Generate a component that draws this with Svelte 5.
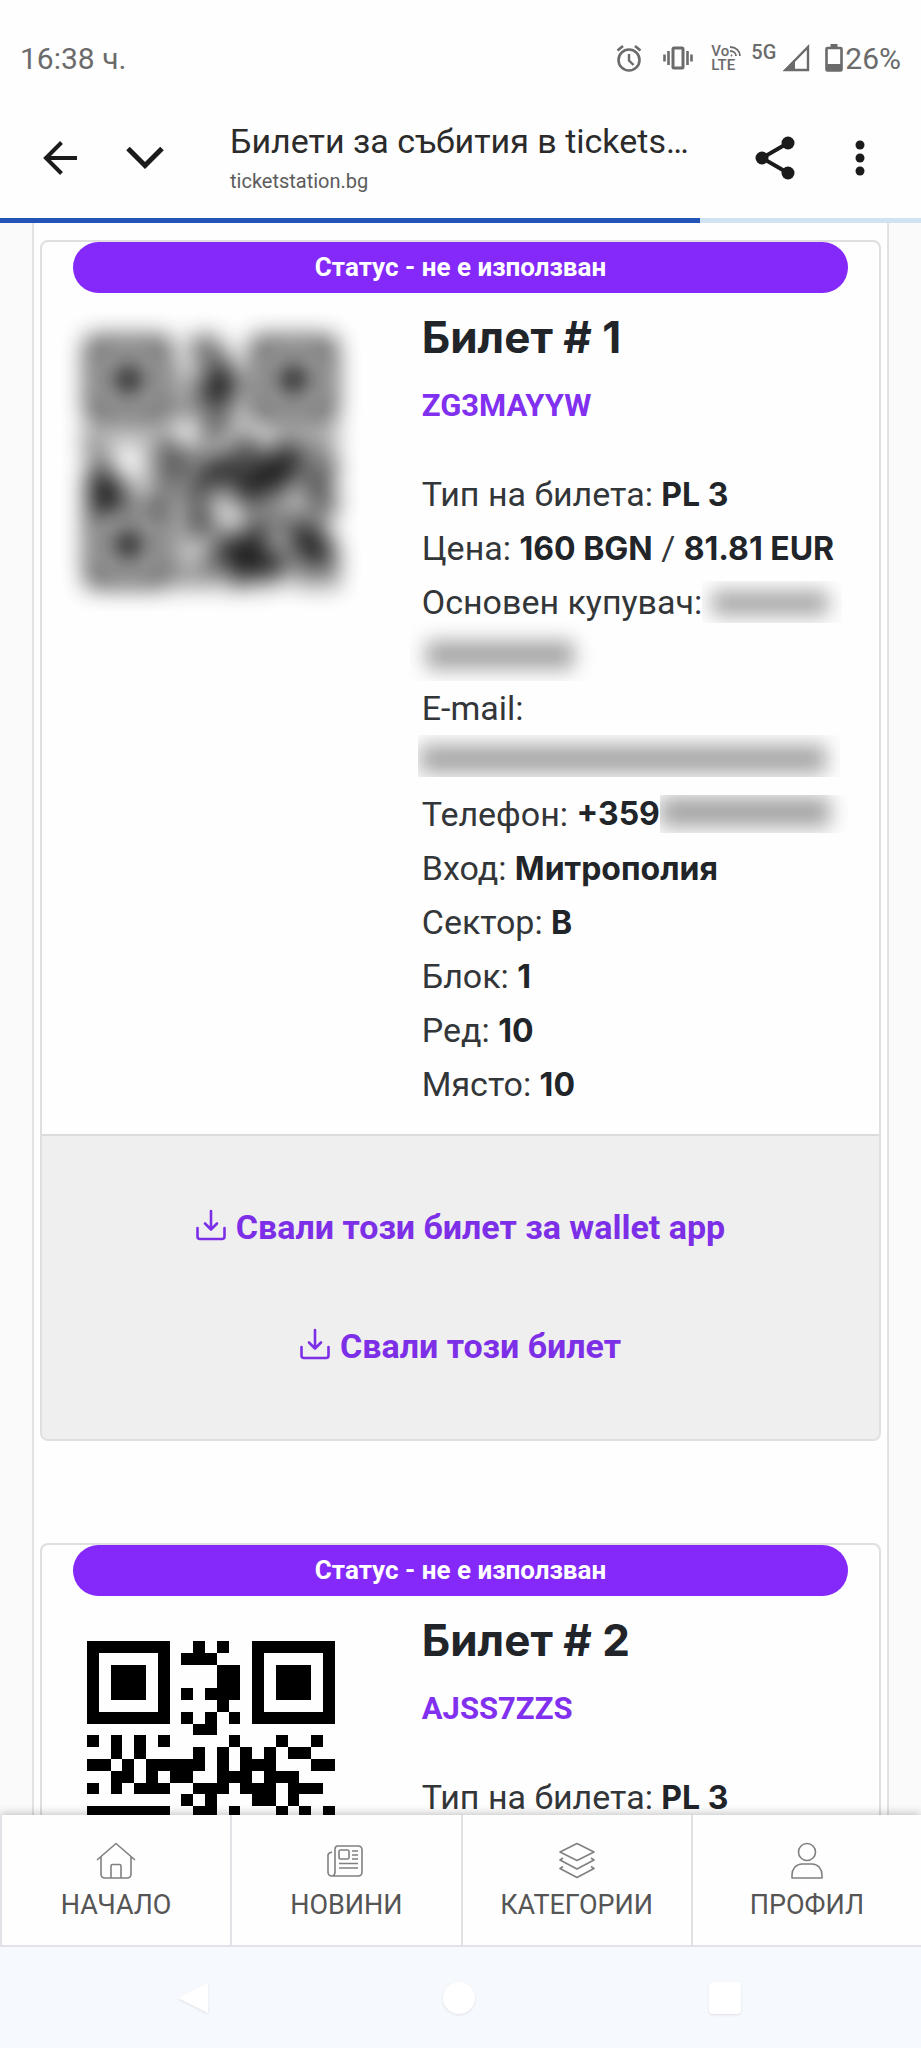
<script lang="ts">
  const progress = 76;

  const blurredCode = [
    "111111100110001111111",
    "100000100101001000001",
    "101110100011001011101",
    "101110101011101011101",
    "101110100111101011101",
    "100000101011001000001",
    "111111101010101111111",
    "000000000011000000000",
    "101010100010010010101",
    "100000110100111011010",
    "010001011011101111101",
    "110000110111111111011",
    "111101010110111110110",
    "111000101101011010011",
    "111111100100010100101",
    "100000101110001011010",
    "101110100101011101110",
    "101110101001111001111",
    "101110100011111110111",
    "100000101010111110101",
    "111111101010110100101",
  ];

  const plainCode = [
    "111111100101001111111",
    "100000101110001000001",
    "101110100001101011101",
    "101110100001101011101",
    "101110101011101011101",
    "100000100001001000001",
    "111111101010101111111",
    "000000000110000000000",
    "101010100000100010010",
    "001010000101010101100",
    "110101111101011100011",
    "001101011001110111000",
    "101011100111011101110",
    "000000001010001101000",
    "111111100110100010101",
    "100000101010110101100",
    "101110100110001011010",
    "101110101001010110101",
    "101110100101101001110",
    "100000101100011010011",
    "111111100011010101100",
  ];

  const tickets = [
    {
      number: 1,
      code: "ZG3MAYYW",
      qr: blurredCode,
      hidden: true,
      seat: [
        ["Вход", "Митрополия"],
        ["Сектор", "B"],
        ["Блок", "1"],
        ["Ред", "10"],
        ["Място", "10"],
      ],
      links: ["Свали този билет за wallet app", "Свали този билет"],
    },
    {
      number: 2,
      code: "AJSS7ZZS",
      qr: plainCode,
      hidden: false,
      seat: [],
      links: [],
    },
  ];

  const qrPath = (rows: string[]) =>
    rows
      .map((row, y) =>
        [...row]
          .map((cell, x) => (cell === "1" ? `M${x} ${y}h1v1h-1z` : ""))
          .join(""),
      )
      .join("");
</script>

<div class="screen" lang="bg">
  <div class="status-bar">
    <span class="clock">16:38 ч.</span>
    <div class="status-icons">
      <svg class="alarm" viewBox="0 0 26 28" fill="none" stroke="currentColor">
        <circle cx="13" cy="16" r="10.5" stroke-width="2.6" />
        <path d="M13 10v6.5l4.5 4.5" stroke-width="2.4" />
        <path d="M1.5 6.5 7 2M24.5 6.5 19 2" stroke-width="2.6" />
      </svg>
      <svg class="vibrate" viewBox="0 0 30 24" fill="none" stroke="currentColor">
        <rect x="10" y="2" width="10" height="20" rx="1" stroke-width="3" />
        <path d="M5.5 5v14M24.5 5v14" stroke-width="2.6" />
        <path d="M1.5 8.5v7M28.5 8.5v7" stroke-width="2.6" />
      </svg>
      <span class="volte">
        <span class="volte-top">
          Vo
          <svg viewBox="0 0 12 12" fill="none" stroke="currentColor" stroke-width="1.8">
            <path d="M1 2c6 0 10 4 10 9M1 6c3.5 0 6 2 6 5M2 10l1 1" />
          </svg>
        </span>
        <span>LTE</span>
      </span>
      <span class="network">5G</span>
      <svg class="signal" viewBox="0 0 28 28">
        <path d="M26 3v23H3.5z" fill="none" stroke="currentColor" stroke-width="2.4" />
        <path d="M13 15v12H1z" fill="currentColor" />
      </svg>
      <svg class="battery" viewBox="0 0 18 28">
        <path d="M5.5 0h7v3h-7z" fill="currentColor" />
        <rect x="1.5" y="4" width="15" height="22.5" rx="1" fill="none" stroke="currentColor" stroke-width="2.6" />
        <path d="M1 20h16v7H1z" fill="currentColor" />
      </svg>
      <span class="percent">26%</span>
    </div>
  </div>

  <header class="app-bar">
    <button class="icon-button" aria-label="Назад">
      <svg width="34" height="34" viewBox="0 0 34 34" fill="none" stroke="currentColor" stroke-width="4">
        <path d="M34 17H3M18.5 1.5 3 17l15.5 15.5" />
      </svg>
    </button>
    <button class="icon-button collapse" aria-label="Свий">
      <svg width="38" height="24" viewBox="0 0 38 24" fill="none" stroke="currentColor" stroke-width="5">
        <path d="M2 2.5 19 19.5 36 2.5" />
      </svg>
    </button>
    <div class="page-title">
      <h1>Билети за събития в tickets…</h1>
      <p>ticketstation.bg</p>
    </div>
    <button class="icon-button share" aria-label="Споделяне">
      <svg width="40" height="44" viewBox="0 0 40 44">
        <path d="M33 7 7 22l26 15" fill="none" stroke="currentColor" stroke-width="4" />
        <circle cx="33" cy="7" r="6.5" fill="currentColor" />
        <circle cx="7" cy="22" r="6.5" fill="currentColor" />
        <circle cx="33" cy="37" r="6.5" fill="currentColor" />
      </svg>
    </button>
    <button class="icon-button" aria-label="Още">
      <svg width="10" height="36" viewBox="0 0 10 36" fill="currentColor">
        <circle cx="5" cy="5" r="4.5" />
        <circle cx="5" cy="18" r="4.5" />
        <circle cx="5" cy="31" r="4.5" />
      </svg>
    </button>
  </header>

  <div class="progress">
    <div class="progress-value" style="width: {progress}%"></div>
  </div>

  <main>
    <div class="container">
      {#each tickets as ticket (ticket.code)}
        <article class="card">
          <div class="status">Статус - не е използван</div>
          <div class="row">
            <div class="qr-col">
              <svg class="qr" class:blurred={ticket.hidden} viewBox="0 0 21 21" shape-rendering="crispEdges">
                <path d={qrPath(ticket.qr)} />
              </svg>
            </div>
            <div class="info-col">
              <h2>Билет # {ticket.number}</h2>
              <p class="code">{ticket.code}</p>
              <div class="details">
                <p>Тип на билета: <b>PL 3</b></p>
                {#if ticket.hidden}
                  <p>Цена: <b>160 BGN</b> / <b>81.81 EUR</b></p>
                  <p class="buyer">Основен купувач:<span class="redacted first-name"><i></i></span></p>
                  <p class="hidden-line"><span class="redacted last-name"><i></i></span></p>
                  <p>E-mail:</p>
                  <p class="hidden-line"><span class="redacted email"><i></i></span></p>
                  <p class="phone">Телефон: <b>+359</b><span class="redacted number"><i></i></span></p>
                {/if}
                {#each ticket.seat as [label, value]}
                  <p>{label}: <b>{value}</b></p>
                {/each}
              </div>
            </div>
          </div>
          {#if ticket.links.length}
            <div class="card-footer">
              {#each ticket.links as link}
                <a href="#download">
                  <svg width="30" height="32" viewBox="0 0 30 32" fill="none" stroke="currentColor" stroke-width="2.6" stroke-linecap="round" stroke-linejoin="round">
                    <path d="M15 2v18M9 14.5l6 6 6-6M1.5 19v8.5q0 2.5 2.5 2.5h22q2.5 0 2.5-2.5V19" />
                  </svg>
                  {link}
                </a>
              {/each}
            </div>
          {/if}
        </article>
      {/each}
    </div>
  </main>

  <nav class="tabs">
    <a href="#home">
      <svg viewBox="0 0 40 40">
        <path d="M1 19 20 2.5 39 19M5 16v17q0 4 4 4h22q4 0 4-4V16M15 37V25q0-1.5 1.5-1.5h7q1.5 0 1.5 1.5v12" />
      </svg>
      НАЧАЛО
    </a>
    <a href="#news">
      <svg viewBox="0 0 40 40">
        <path d="M9 32V8q0-3 3-3h20q4 0 4 4v22q0 4-4 4H6q-4 0-4-4V14q0-2 4-3M9 30q0 5-3 5" />
        <rect x="13" y="9" width="10" height="9" rx="1.5" />
        <path d="M26 10h6M26 14h6M26 18h6M13 22.5h19M13 27h19" />
      </svg>
      НОВИНИ
    </a>
    <a href="#categories">
      <svg viewBox="0 0 40 40">
        <path d="m20 2.5 17 8.5-17 8.5L3 11zM6 17l-3 2 17 9 17-9-3-2M6 25.5l-3 2 17 9 17-9-3-2" />
      </svg>
      КАТЕГОРИИ
    </a>
    <a href="#profile">
      <svg viewBox="0 0 40 40">
        <circle cx="20" cy="11" r="8.5" />
        <path d="M5 37v-3c0-6 4-11 10-11h10c6 0 10 5 10 11v3z" />
      </svg>
      ПРОФИЛ
    </a>
  </nav>

  <div class="system-nav">
    <button aria-label="Системно назад">
      <svg viewBox="0 0 34 34"><path d="M32 2v30L2 17z" /></svg>
    </button>
    <button aria-label="Начален екран">
      <svg viewBox="0 0 34 34"><circle cx="17" cy="17" r="16" /></svg>
    </button>
    <button aria-label="Последни приложения">
      <svg viewBox="0 0 34 34"><rect x="1" y="1" width="32" height="32" rx="4" /></svg>
    </button>
  </div>
</div>

<style>
  :global(body) {
    margin: 0;
    background: #fff;
  }

  .screen {
    display: flex;
    flex-direction: column;
    height: 100vh;
    overflow: hidden;
    font-family: Roboto, "Liberation Sans", sans-serif;
    color: #212529;
    background: #fefefe;
  }

  h1,
  h2,
  p {
    margin: 0;
  }

  button {
    padding: 0;
    border: 0;
    background: none;
    color: inherit;
  }

  a {
    color: inherit;
    text-decoration: none;
  }

  .status-bar {
    display: flex;
    flex-shrink: 0;
    align-items: center;
    justify-content: space-between;
    height: 116px;
    padding: 0 20px;
    color: #6b6b6b;
    font-size: 30px;
  }

  .status-icons {
    display: flex;
    align-items: center;
  }

  .alarm {
    width: 26px;
    height: 28px;
    margin-right: 20px;
  }

  .vibrate {
    width: 32px;
    height: 24px;
    margin-right: 17px;
  }

  .volte {
    display: flex;
    flex-direction: column;
    width: 40px;
    font-size: 15px;
    font-weight: 500;
    line-height: 14px;
  }

  .volte-top {
    display: flex;
    align-items: center;
  }

  .volte-top svg {
    width: 12px;
    height: 12px;
  }

  .network {
    margin-right: 6px;
    padding-bottom: 12px;
    font-size: 20px;
    font-weight: 500;
    line-height: 20px;
  }

  .signal {
    width: 28px;
    height: 28px;
    margin-right: 15px;
  }

  .battery {
    width: 18px;
    height: 28px;
    margin-right: 2px;
  }

  .app-bar {
    display: flex;
    flex-shrink: 0;
    align-items: center;
    height: 102px;
    padding: 0 56px 0 43px;
    color: #1b1b1b;
  }

  .icon-button {
    display: flex;
    margin-top: -18px;
  }

  .icon-button.collapse {
    margin-left: 49px;
  }

  .icon-button.share {
    margin-right: 60px;
  }

  .page-title {
    flex: 1;
    min-width: 0;
    margin-left: 66px;
    padding-bottom: 16px;
  }

  .page-title h1 {
    color: #2b2b2b;
    font-size: 34px;
    font-weight: 400;
    line-height: 44px;
    white-space: nowrap;
  }

  .page-title p {
    color: #5c5c5c;
    font-size: 20px;
    line-height: 36px;
  }

  .progress {
    flex-shrink: 0;
    height: 5px;
    background: #cfe3f0;
  }

  .progress-value {
    height: 100%;
    background: #2354b8;
  }

  main {
    flex: 1;
    min-height: 0;
    overflow: hidden;
    background: #fafafa;
  }

  .container {
    margin: 0 32px;
    padding: 17px 6px 0;
    border: solid #e2e2e4;
    border-width: 0 2px;
    background: #fefefe;
  }

  .card {
    margin-bottom: 102px;
    border: 2px solid #dfdfdf;
    border-radius: 8px;
    overflow: hidden;
  }

  .status {
    margin: 0 31px;
    border-radius: 26px;
    background: #8429fa;
    color: #fff;
    font-size: 26px;
    font-weight: 700;
    line-height: 51px;
    text-align: center;
  }

  .row {
    display: flex;
    min-height: 841px;
  }

  .qr-col {
    flex: 0 0 41.667%;
    box-sizing: border-box;
    padding: 45px 56px 0 45px;
  }

  .qr {
    display: block;
    width: 100%;
    aspect-ratio: 1;
    overflow: visible;
  }

  .qr.blurred {
    opacity: 0.9;
    filter: blur(12px);
  }

  .info-col {
    flex: 1;
    padding: 18px 31px 0;
  }

  h2,
  b {
    font-family: Inter, "Liberation Sans", sans-serif;
  }

  h2 {
    font-size: 44px;
    font-weight: 700;
    line-height: 52px;
  }

  .code {
    margin-top: 16px;
    color: #8030ee;
    font-size: 31px;
    font-weight: 700;
    line-height: 54px;
  }

  .details {
    margin-top: 34px;
    color: #333639;
    font-size: 34px;
    line-height: 54px;
    white-space: nowrap;
  }

  .details p {
    height: 54px;
  }

  .details b {
    color: #212529;
    font-size: 32px;
  }

  .details .hidden-line {
    display: flex;
    height: 52px;
  }

  .details .buyer,
  .details .phone {
    display: flex;
    align-items: center;
    white-space: pre;
  }

  .redacted {
    display: flex;
    overflow: hidden;
  }

  .redacted i {
    flex: 1;
    background: #a4a4a4;
    filter: blur(10px);
  }

  .first-name {
    width: 140px;
    height: 42px;
  }

  .first-name i {
    margin: 10px 14px 8px 10px;
  }

  .last-name {
    width: 194px;
    height: 60px;
    margin: -8px 0 0 -12px;
  }

  .last-name i {
    margin: 20px 30px 12px 16px;
  }

  .email {
    width: 422px;
    height: 42px;
    margin-left: -4px;
  }

  .email i {
    margin: 10px 14px 4px 2px;
  }

  .number {
    width: 188px;
    height: 38px;
  }

  .number i {
    margin: 2px 18px 6px 0;
  }

  .card-footer {
    display: flex;
    flex-direction: column;
    align-items: center;
    gap: 65px;
    padding: 64px 0 66px;
    border-top: 2px solid #dcdcdc;
    background: #efefef;
    color: #7d2fe8;
    font-size: 34px;
    font-weight: 700;
    line-height: 54px;
  }

  .card-footer a {
    display: flex;
    align-items: center;
    gap: 10px;
  }

  .card-footer svg {
    margin-bottom: 4px;
  }

  .tabs {
    display: grid;
    flex-shrink: 0;
    grid-template-columns: repeat(4, 1fr);
    position: relative;
    height: 132px;
    border-bottom: 2px solid #e2e2ea;
    background: #fefefe;
    box-shadow: 0 0 10px rgba(0, 0, 0, 0.3);
    box-sizing: border-box;
  }

  .tabs a {
    display: flex;
    flex-direction: column;
    align-items: center;
    padding-top: 26px;
    border-left: 2px solid #e2e2e6;
    color: #555;
    font-size: 27px;
    line-height: 48px;
  }

  .tabs svg {
    width: 40px;
    height: 40px;
    fill: none;
    stroke: #808080;
    stroke-width: 1.6;
    stroke-linejoin: round;
  }

  .system-nav {
    display: flex;
    flex-shrink: 0;
    align-items: center;
    justify-content: space-between;
    position: relative;
    height: 101px;
    padding: 0 179px 0 176px;
    background: #f6f9fd;
    box-sizing: border-box;
  }

  .system-nav svg {
    display: block;
    width: 34px;
    height: 34px;
    fill: #fff;
    filter: drop-shadow(0 1px 1px #e0e0e6);
  }
</style>
